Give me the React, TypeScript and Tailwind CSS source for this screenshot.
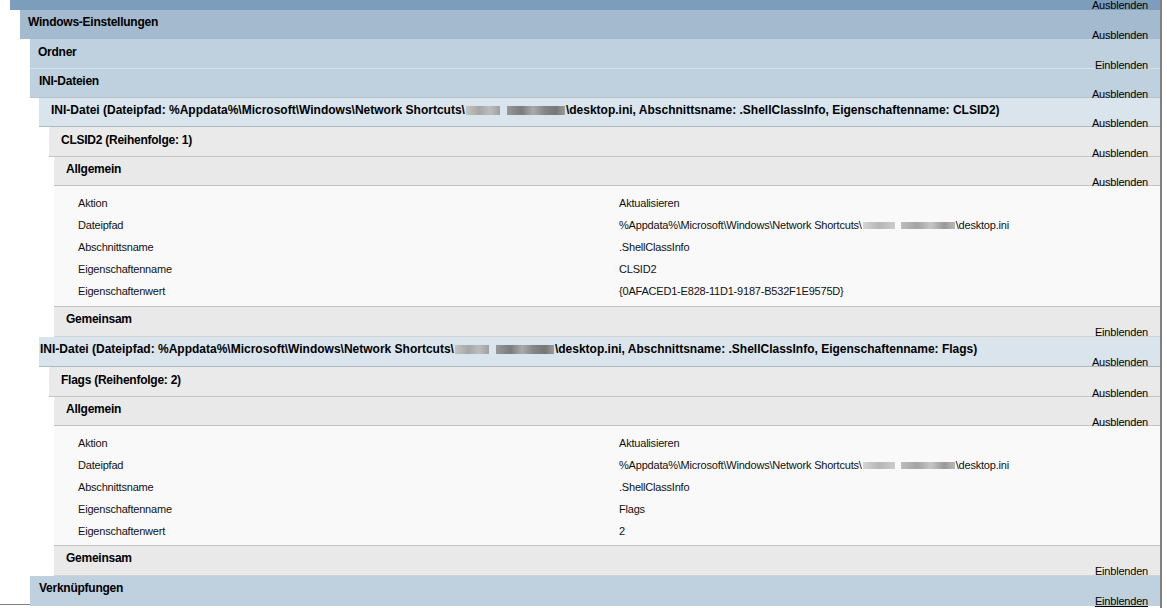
import React from "react";

type RowProps = {
  wrap: string;
  box: string;
  title?: React.ReactNode;
  titleCls?: string;
  link: string;
  underline?: boolean;
};

function Row({ wrap, box, title, titleCls, link, underline }: RowProps) {
  return (
    <div className={wrap}>
      <div className={"flex flex-col " + box}>
        {title !== undefined && (
          <div className={"font-bold text-[12px] leading-[16px] text-black whitespace-nowrap " + (titleCls ?? "tracking-[-0.25px]")}>
            {title}
          </div>
        )}
        <div className="mt-auto self-end pr-[12px] text-[11px] tracking-[-0.2px] leading-[11px] text-black">
          <span className={underline ? "underline" : ""}>{link}</span>
        </div>
      </div>
    </div>
  );
}

function BlurA() {
  return (
    <span className="inline-flex items-center align-middle gap-[7px] mx-[1px]">
      <span className="inline-block w-[34px] h-[9px] blur-[0.7px] bg-[linear-gradient(90deg,#c4c4c4_0%,#a6a6a6_40%,#bdbdbd_70%,#a0a0a0_100%)]" />
      <span className="inline-block w-[58px] h-[9px] blur-[0.7px] bg-[linear-gradient(90deg,#979797_0%,#7c7c7c_25%,#aaaaaa_45%,#858585_65%,#777777_85%,#9c9c9c_100%)]" />
    </span>
  );
}

function BlurB() {
  return (
    <span className="inline-flex items-center align-middle gap-[6px] mx-[1px]">
      <span className="inline-block w-[32px] h-[7px] blur-[0.7px] bg-[linear-gradient(90deg,#d4d4d4_0%,#b6b6b6_50%,#cccccc_100%)]" />
      <span className="inline-block w-[54px] h-[7px] blur-[0.7px] bg-[linear-gradient(90deg,#bdbdbd_0%,#a3a3a3_30%,#c6c6c6_55%,#999999_80%,#b8b8b8_100%)]" />
    </span>
  );
}

function Table({ rows, wrap }: { rows: [string, React.ReactNode][]; wrap: string }) {
  return (
    <div className={wrap}>
      <div className="bg-[#f9f9f9] border-b border-[#c3c3c3] pt-[6px] pl-[24px] h-full">
        {rows.map(([k, v], i) => (
          <div key={i} className="flex h-[22px] items-center text-[11px] tracking-[-0.2px] text-[#111]">
            <div className="w-[541px] shrink-0">{k}</div>
            <div className="whitespace-nowrap">{v}</div>
          </div>
        ))}
      </div>
    </div>
  );
}

export default function App() {
  const font = { fontFamily: '"Liberation Sans", Arial, sans-serif' };
  const path1 = (
    <span className="inline-flex items-center">
      %Appdata%\Microsoft\Windows\Network Shortcuts\
      <BlurB />
      \desktop.ini
    </span>
  );
  return (
    <div className="bg-white w-[1167px] h-[608px] overflow-hidden" style={font}>
      <div className="w-[1162px] border-r-2 border-[#7f7f7f] h-[608px]">
        {/* top cut-off bar */}
        <Row wrap="pl-[10px]" box="h-[10px] overflow-hidden bg-[#7d9dbc]" link="Ausblenden" />
        <Row
          wrap="pl-[20px]"
          box="h-[29px] bg-[#a4bace] pl-[8px] pt-[4px]"
          title="Windows-Einstellungen"
          link="Ausblenden"
        />
        <Row
          wrap="pl-[30px]"
          box="h-[30px] bg-[#bfd1de] border-b border-[#d5e0e8] pl-[8px] pt-[5px]"
          title="Ordner"
          link="Einblenden"
        />
        <Row
          wrap="pl-[30px]"
          box="h-[29px] bg-[#bfd1de] border-b border-[#b3c4d1] pl-[9px] pt-[4px]"
          title="INI-Dateien"
          link="Ausblenden"
        />
        <Row
          wrap="pl-[39px]"
          box="h-[29px] bg-[#d9e4ec] border-b border-[#aeb9c2] pl-[12px] pt-[4px]"
          titleCls="tracking-[0px]"
          title={
            <span className="inline-flex items-center">
              INI-Datei (Dateipfad: %Appdata%\Microsoft\Windows\Network Shortcuts\
              <BlurA />
              \desktop.ini, Abschnittsname: .ShellClassInfo, Eigenschaftenname: CLSID2)
            </span>
          }
          link="Ausblenden"
        />
        <Row
          wrap="pl-[49px]"
          box="h-[30px] bg-[#eaeaea] border-b border-[#c4c4c4] pl-[12px] pt-[5px]"
          title="CLSID2 (Reihenfolge: 1)"
          link="Ausblenden"
        />
        <Row
          wrap="pl-[54px]"
          box="h-[29px] bg-[#e9e9e9] border-b border-[#c4c4c4] pl-[12px] pt-[4px]"
          title="Allgemein"
          link="Ausblenden"
        />
        <Table
          wrap="pl-[54px] h-[121px]"
          rows={[
            ["Aktion", "Aktualisieren"],
            ["Dateipfad", path1],
            ["Abschnittsname", ".ShellClassInfo"],
            ["Eigenschaftenname", "CLSID2"],
            ["Eigenschaftenwert", "{0AFACED1-E828-11D1-9187-B532F1E9575D}"],
          ]}
        />
        <Row
          wrap="pl-[54px]"
          box="h-[30px] bg-[#e9e9e9] border-b border-[#d2d2d2] pl-[12px] pt-[4px]"
          title="Gemeinsam"
          link="Einblenden"
        />
        <Row
          wrap="pl-[39px]"
          box="h-[30px] bg-[#d9e4ec] border-b border-[#aeb9c2] pl-[1px] pt-[4px]"
          titleCls="tracking-[0px]"
          title={
            <span className="inline-flex items-center">
              INI-Datei (Dateipfad: %Appdata%\Microsoft\Windows\Network Shortcuts\
              <BlurA />
              \desktop.ini, Abschnittsname: .ShellClassInfo, Eigenschaftenname: Flags)
            </span>
          }
          link="Ausblenden"
        />
        <Row
          wrap="pl-[49px]"
          box="h-[30px] bg-[#eaeaea] border-b border-[#c4c4c4] pl-[12px] pt-[5px]"
          title="Flags (Reihenfolge: 2)"
          link="Ausblenden"
        />
        <Row
          wrap="pl-[54px]"
          box="h-[29px] bg-[#e9e9e9] border-b border-[#c4c4c4] pl-[12px] pt-[4px]"
          title="Allgemein"
          link="Ausblenden"
        />
        <Table
          wrap="pl-[54px] h-[120px]"
          rows={[
            ["Aktion", "Aktualisieren"],
            ["Dateipfad", path1],
            ["Abschnittsname", ".ShellClassInfo"],
            ["Eigenschaftenname", "Flags"],
            ["Eigenschaftenwert", "2"],
          ]}
        />
        <Row
          wrap="pl-[54px]"
          box="h-[30px] bg-[#e9e9e9] border-b border-[#d2d2d2] pl-[12px] pt-[4px]"
          title="Gemeinsam"
          link="Einblenden"
        />
        <div className="flex">
          <div className="w-[30px] shrink-0 flex flex-col justify-end">
            <div className="h-[1px] bg-[#7f7f7f] mb-[1px]" />
          </div>
          <Row
            wrap="flex-1"
            box="h-[30px] bg-[#bfd1de] pl-[9px] pt-[4px]"
            title="Verknüpfungen"
            link="Einblenden"
            underline
          />
        </div>
      </div>
    </div>
  );
}
